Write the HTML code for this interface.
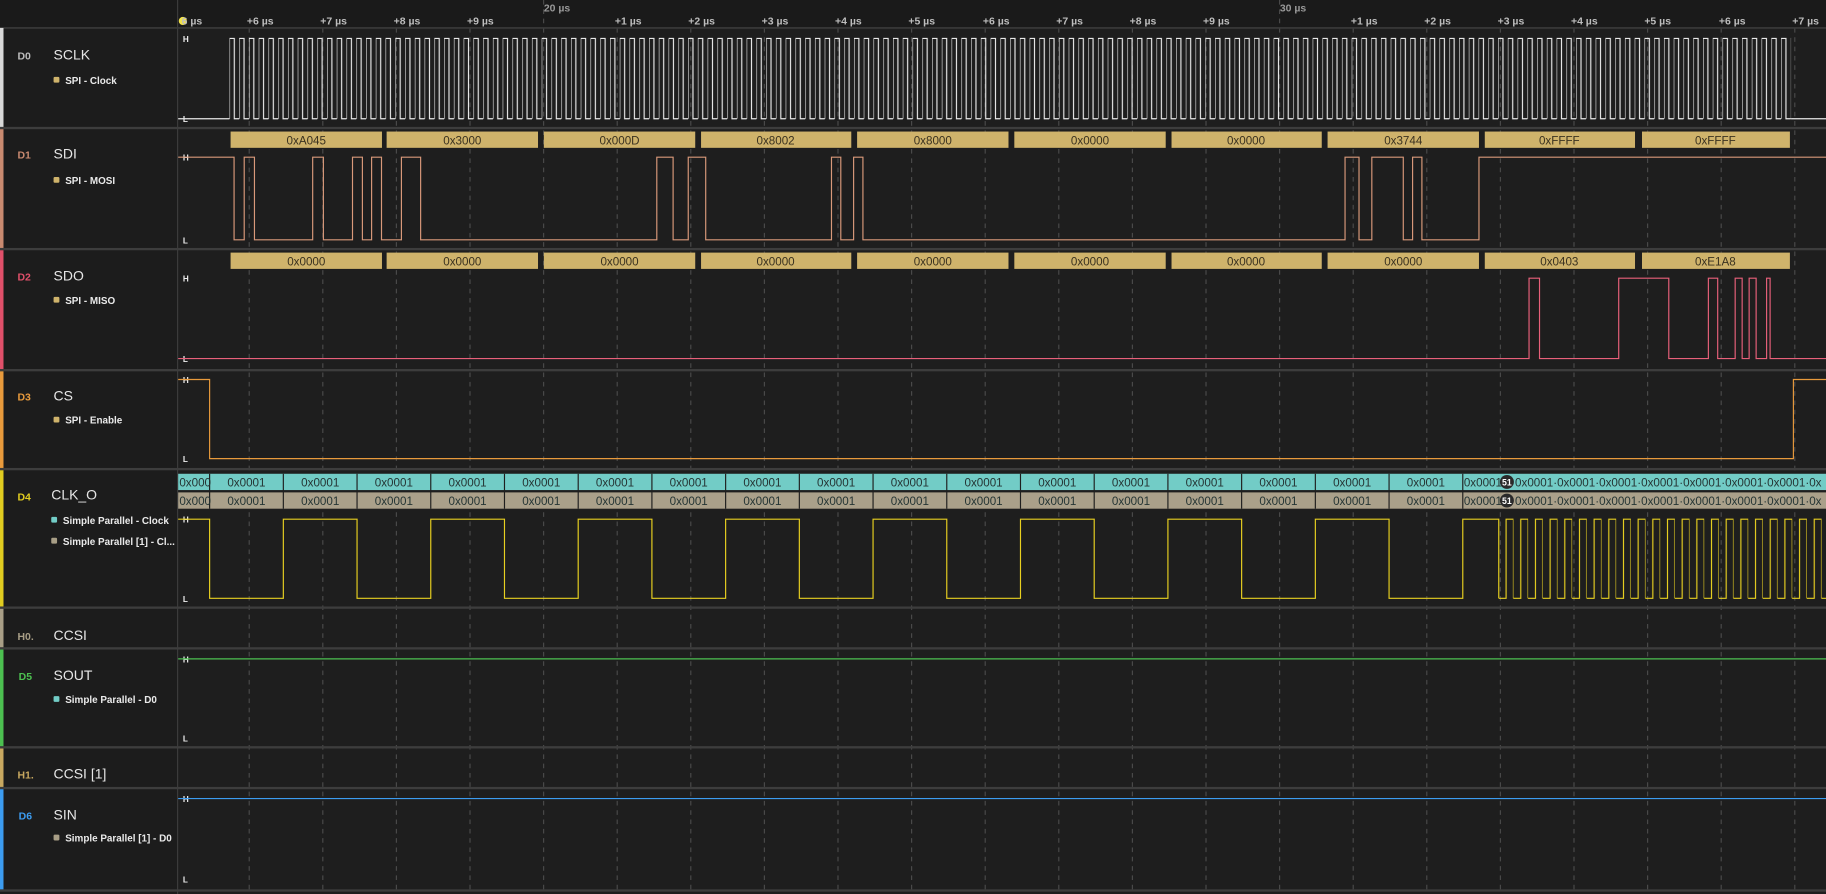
<!DOCTYPE html>
<html><head><meta charset="utf-8"><style>
html,body{margin:0;padding:0;background:#1c1c1c;overflow:hidden}
svg{display:block}
text{font-family:"Liberation Sans",sans-serif}
</style></head><body>
<svg width="1826" height="894" viewBox="0 0 1568 768" preserveAspectRatio="none" xmlns="http://www.w3.org/2000/svg">
<defs>
<pattern id="clk" patternUnits="userSpaceOnUse" x="197" y="0" width="8.38" height="768">
<path d="M0,102 V33 H4.19 V102 H8.38" fill="none" stroke="#e8e8e8" stroke-width="1"/>
</pattern>
<pattern id="fast" patternUnits="userSpaceOnUse" x="1287" y="0" width="12.6" height="768">
<path d="M0,514 H6.3 V446 H12.6 V514" fill="none" stroke="#e8d020" stroke-width="1"/>
</pattern>
</defs>
<rect width="1568" height="768" fill="#1e1e1e"/>
<rect width="152" height="768" fill="#1c1c1c"/>
<rect width="1568" height="24" fill="#1a1a1a"/>
<g stroke="#4a4a4a" stroke-dasharray="4,4" stroke-width="1">
<line x1="214" y1="24" x2="214" y2="768"/><line x1="277.2" y1="24" x2="277.2" y2="768"/><line x1="340.4" y1="24" x2="340.4" y2="768"/><line x1="403.6" y1="24" x2="403.6" y2="768"/><line x1="466.8" y1="0" x2="466.8" y2="768"/><line x1="530" y1="24" x2="530" y2="768"/><line x1="593.2" y1="24" x2="593.2" y2="768"/><line x1="656.4" y1="24" x2="656.4" y2="768"/><line x1="719.6" y1="24" x2="719.6" y2="768"/><line x1="782.8" y1="24" x2="782.8" y2="768"/><line x1="846" y1="24" x2="846" y2="768"/><line x1="909.2" y1="24" x2="909.2" y2="768"/><line x1="972.4" y1="24" x2="972.4" y2="768"/><line x1="1035.6" y1="24" x2="1035.6" y2="768"/><line x1="1098.8" y1="0" x2="1098.8" y2="768"/><line x1="1162" y1="24" x2="1162" y2="768"/><line x1="1225.2" y1="24" x2="1225.2" y2="768"/><line x1="1288.4" y1="24" x2="1288.4" y2="768"/><line x1="1351.6" y1="24" x2="1351.6" y2="768"/><line x1="1414.8" y1="24" x2="1414.8" y2="768"/><line x1="1478" y1="24" x2="1478" y2="768"/><line x1="1541.2" y1="24" x2="1541.2" y2="768"/>
</g>
<line x1="152.5" y1="0" x2="152.5" y2="768" stroke="#3c3c3c"/>
<line x1="0" y1="24" x2="1568" y2="24" stroke="#3a3a3a" stroke-width="1.5"/>
<g fill="#bdbdbd" font-size="9" font-weight="bold">
<circle cx="157" cy="18" r="3.5" fill="#f2e24a"/>
<text x="156" y="21">6 µs</text>
<text x="212" y="21">+6 µs</text><text x="275" y="21">+7 µs</text><text x="338" y="21">+8 µs</text><text x="401" y="21">+9 µs</text>
<text x="467" y="10" fill="#999">20 µs</text>
<text x="528" y="21">+1 µs</text><text x="591" y="21">+2 µs</text><text x="654" y="21">+3 µs</text><text x="717" y="21">+4 µs</text><text x="780" y="21">+5 µs</text><text x="844" y="21">+6 µs</text><text x="907" y="21">+7 µs</text><text x="970" y="21">+8 µs</text><text x="1033" y="21">+9 µs</text>
<text x="1099" y="10" fill="#999">30 µs</text>
<text x="1160" y="21">+1 µs</text><text x="1223" y="21">+2 µs</text><text x="1286" y="21">+3 µs</text><text x="1349" y="21">+4 µs</text><text x="1412" y="21">+5 µs</text><text x="1476" y="21">+6 µs</text><text x="1539" y="21">+7 µs</text>
</g>
<g fill="#3d3d3d">
<rect x="0" y="109" width="1568" height="2"/><rect x="0" y="213" width="1568" height="2"/><rect x="0" y="317" width="1568" height="2"/><rect x="0" y="402" width="1568" height="2"/><rect x="0" y="521" width="1568" height="2"/><rect x="0" y="556" width="1568" height="2"/><rect x="0" y="641" width="1568" height="2"/><rect x="0" y="676" width="1568" height="2"/><rect x="0" y="764" width="1568" height="2"/>
</g>
<rect x="0" y="24" width="3" height="85" fill="#d8d8d8"/>
<rect x="0" y="111" width="3" height="102" fill="#c98a70"/>
<rect x="0" y="215" width="3" height="102" fill="#e0506a"/>
<rect x="0" y="319" width="3" height="83" fill="#e89a3c"/>
<rect x="0" y="404" width="3" height="117" fill="#e0cc20"/>
<rect x="0" y="523" width="3" height="33" fill="#a89e86"/>
<rect x="0" y="558" width="3" height="83" fill="#4cc050"/>
<rect x="0" y="643" width="3" height="33" fill="#c8a860"/>
<rect x="0" y="678" width="3" height="86" fill="#3c9cf0"/>
<g font-size="9" font-weight="bold">
<text x="15" y="51" fill="#bdbdbd">D0</text>
<text x="15" y="136" fill="#c98a70">D1</text>
<text x="15" y="241" fill="#e0506a">D2</text>
<text x="15" y="344" fill="#e89a3c">D3</text>
<text x="15" y="430" fill="#e0cc20">D4</text>
<text x="15" y="550" fill="#a89e86">H0.</text>
<text x="16" y="584" fill="#4cc050">D5</text>
<text x="15" y="669" fill="#c8a860">H1.</text>
<text x="16" y="704" fill="#3c9cf0">D6</text>
</g>
<g font-size="12" fill="#e6e6e6">
<text x="46" y="51">SCLK</text><text x="46" y="136">SDI</text><text x="46" y="241">SDO</text><text x="46" y="344">CS</text><text x="44" y="429">CLK_O</text><text x="46" y="550">CCSI</text><text x="46" y="584">SOUT</text><text x="46" y="669">CCSI [1]</text><text x="46" y="704">SIN</text>
</g>
<g font-size="8.5" fill="#eaeaea" font-weight="bold">
<rect x="46" y="66" width="5" height="5" rx="1" fill="#cfb36b"/><text x="56" y="72">SPI - Clock</text>
<rect x="46" y="152" width="5" height="5" rx="1" fill="#cfb36b"/><text x="56" y="158">SPI - MOSI</text>
<rect x="46" y="255" width="5" height="5" rx="1" fill="#cfb36b"/><text x="56" y="261">SPI - MISO</text>
<rect x="46" y="358" width="5" height="5" rx="1" fill="#cfb36b"/><text x="56" y="364">SPI - Enable</text>
<rect x="44" y="444" width="5" height="5" rx="1" fill="#72ccc6"/><text x="54" y="450">Simple Parallel - Clock</text>
<rect x="44" y="462" width="5" height="5" rx="1" fill="#a89e86"/><text x="54" y="468">Simple Parallel [1] - Cl...</text>
<rect x="46" y="598" width="5" height="5" rx="1" fill="#72ccc6"/><text x="56" y="604">Simple Parallel - D0</text>
<rect x="46" y="717" width="5" height="5" rx="1" fill="#a89e86"/><text x="56" y="723">Simple Parallel [1] - D0</text>
</g>
<g font-size="7" font-weight="bold" fill="#eee">
<text x="157" y="36">H</text><text x="157" y="105">L</text>
<text x="157" y="138">H</text><text x="157" y="209">L</text>
<text x="157" y="242">H</text><text x="157" y="311">L</text>
<text x="157" y="329">H</text><text x="157" y="397">L</text>
<text x="157" y="449">H</text><text x="157" y="517">L</text>
<text x="157" y="569">H</text><text x="157" y="637">L</text>
<text x="157" y="689">H</text><text x="157" y="758">L</text>
</g>
<path d="M153,102 H197" stroke="#e8e8e8" fill="none"/>
<rect x="197" y="30" width="1341" height="75" fill="url(#clk)"/>
<path d="M1538,102 H1568" stroke="#e8e8e8" fill="none"/>
<g fill="#cfb36b">
<rect x="198" y="113" width="130" height="14"/><rect x="332" y="113" width="130" height="14"/><rect x="467" y="113" width="130" height="14"/><rect x="602" y="113" width="129" height="14"/><rect x="736" y="113" width="130" height="14"/><rect x="871" y="113" width="130" height="14"/><rect x="1006" y="113" width="129" height="14"/><rect x="1140" y="113" width="130" height="14"/><rect x="1275" y="113" width="129" height="14"/><rect x="1410" y="113" width="127" height="14"/>
<rect x="198" y="217" width="130" height="14"/><rect x="332" y="217" width="130" height="14"/><rect x="467" y="217" width="130" height="14"/><rect x="602" y="217" width="129" height="14"/><rect x="736" y="217" width="130" height="14"/><rect x="871" y="217" width="130" height="14"/><rect x="1006" y="217" width="129" height="14"/><rect x="1140" y="217" width="130" height="14"/><rect x="1275" y="217" width="129" height="14"/><rect x="1410" y="217" width="127" height="14"/>
</g>
<g font-size="10" fill="#3a3220" text-anchor="middle">
<text x="263" y="124">0xA045</text><text x="397" y="124">0x3000</text><text x="532" y="124">0x000D</text><text x="666" y="124">0x8002</text><text x="801" y="124">0x8000</text><text x="936" y="124">0x0000</text><text x="1070" y="124">0x0000</text><text x="1205" y="124">0x3744</text><text x="1339" y="124">0xFFFF</text><text x="1473" y="124">0xFFFF</text>
<text x="263" y="228">0x0000</text><text x="397" y="228">0x0000</text><text x="532" y="228">0x0000</text><text x="666" y="228">0x0000</text><text x="801" y="228">0x0000</text><text x="936" y="228">0x0000</text><text x="1070" y="228">0x0000</text><text x="1205" y="228">0x0000</text><text x="1339" y="228">0x0403</text><text x="1473" y="228">0xE1A8</text>
</g>
<path d="M153,135 H201 V206 H209.7 V135 H218.5 V206 H268.5 V135 H277.7 V206 H302.7 V135 H311.2 V206 H319.1 V135 H327.6 V206 H344.7 V135 H361.2 V206 H564 V135 H578 V206 H591 V135 H606 V206 H714 V135 H722 V206 H733 V135 H741 V206 H1155 V135 H1167 V206 H1178 V135 H1205 V206 H1213 V135 H1221 V206 H1270 V135 H1568" fill="none" stroke="#d9997a"/>
<path d="M153,308 H1313 V239 H1322 V308 H1390 V239 H1433 V308 H1467 V239 H1475 V308 H1490 V239 H1496 V308 H1502 V239 H1508 V308 H1517 V239 H1520 V308 H1568" fill="none" stroke="#e8607a"/>
<path d="M153,326 H180 V394 H1540 V326 H1568" fill="none" stroke="#e89a3c"/>
<rect x="153" y="407" width="1415" height="14" fill="#72ccc6"/>
<rect x="153" y="423" width="1415" height="14" fill="#aaa08a"/>
<g stroke="#1e1e1e" stroke-width="1">
<line x1="180" y1="407" x2="180" y2="437"/><line x1="243.3" y1="407" x2="243.3" y2="437"/><line x1="306.6" y1="407" x2="306.6" y2="437"/><line x1="369.9" y1="407" x2="369.9" y2="437"/><line x1="433.2" y1="407" x2="433.2" y2="437"/><line x1="496.5" y1="407" x2="496.5" y2="437"/><line x1="559.8" y1="407" x2="559.8" y2="437"/><line x1="623.1" y1="407" x2="623.1" y2="437"/><line x1="686.4" y1="407" x2="686.4" y2="437"/><line x1="749.7" y1="407" x2="749.7" y2="437"/><line x1="813" y1="407" x2="813" y2="437"/><line x1="876.3" y1="407" x2="876.3" y2="437"/><line x1="939.6" y1="407" x2="939.6" y2="437"/><line x1="1002.9" y1="407" x2="1002.9" y2="437"/><line x1="1066.2" y1="407" x2="1066.2" y2="437"/><line x1="1129.5" y1="407" x2="1129.5" y2="437"/><line x1="1192.8" y1="407" x2="1192.8" y2="437"/><line x1="1256.1" y1="407" x2="1256.1" y2="437"/>
</g>
<g font-size="10" fill="#253534" text-anchor="middle">
<text x="211.6" y="418">0x0001</text><text x="275" y="418">0x0001</text><text x="338.2" y="418">0x0001</text><text x="401.5" y="418">0x0001</text><text x="464.8" y="418">0x0001</text><text x="528.1" y="418">0x0001</text><text x="591.4" y="418">0x0001</text><text x="654.7" y="418">0x0001</text><text x="718" y="418">0x0001</text><text x="781.3" y="418">0x0001</text><text x="844.6" y="418">0x0001</text><text x="907.9" y="418">0x0001</text><text x="971.2" y="418">0x0001</text><text x="1034.5" y="418">0x0001</text><text x="1097.8" y="418">0x0001</text><text x="1161.1" y="418">0x0001</text><text x="1224.4" y="418">0x0001</text>
<text x="211.6" y="434">0x0001</text><text x="275" y="434">0x0001</text><text x="338.2" y="434">0x0001</text><text x="401.5" y="434">0x0001</text><text x="464.8" y="434">0x0001</text><text x="528.1" y="434">0x0001</text><text x="591.4" y="434">0x0001</text><text x="654.7" y="434">0x0001</text><text x="718" y="434">0x0001</text><text x="781.3" y="434">0x0001</text><text x="844.6" y="434">0x0001</text><text x="907.9" y="434">0x0001</text><text x="971.2" y="434">0x0001</text><text x="1034.5" y="434">0x0001</text><text x="1097.8" y="434">0x0001</text><text x="1161.1" y="434">0x0001</text><text x="1224.4" y="434">0x0001</text>
</g>
<g font-size="10" fill="#253534">
<text x="154" y="418">0x000</text><text x="154" y="434">0x000</text>
<text x="1257" y="418">0x0001</text><text x="1257" y="434">0x0001</text>
</g>
<circle cx="1294" cy="414" r="6" fill="#2a2a2a"/><circle cx="1294" cy="430" r="6" fill="#2a2a2a"/>
<g font-size="7.5" font-weight="bold" fill="#fff" text-anchor="middle"><text x="1294" y="417">51</text><text x="1294" y="433">51</text></g>
<g font-size="10" fill="#253534">
<text x="1301" y="418">0x0001·0x0001·0x0001·0x0001·0x0001·0x0001·0x0001·0x</text>
<text x="1301" y="434">0x0001·0x0001·0x0001·0x0001·0x0001·0x0001·0x0001·0x</text>
</g>
<path d="M153,446 H180 V514 H243.3 V446 H306.6 V514 H369.9 V446 H433.2 V514 H496.5 V446 H559.8 V514 H623.1 V446 H686.4 V514 H749.7 V446 H813 V514 H876.3 V446 H939.6 V514 H1002.9 V446 H1066.2 V514 H1129.5 V446 H1192.8 V514 H1256.1 V446 H1287 V514" fill="none" stroke="#e8d020"/>
<rect x="1287" y="440" width="281" height="80" fill="url(#fast)"/>
<line x1="153" y1="566" x2="1568" y2="566" stroke="#4cc050"/>
<line x1="153" y1="686" x2="1568" y2="686" stroke="#3c9cf0"/>
</svg>
</body></html>
